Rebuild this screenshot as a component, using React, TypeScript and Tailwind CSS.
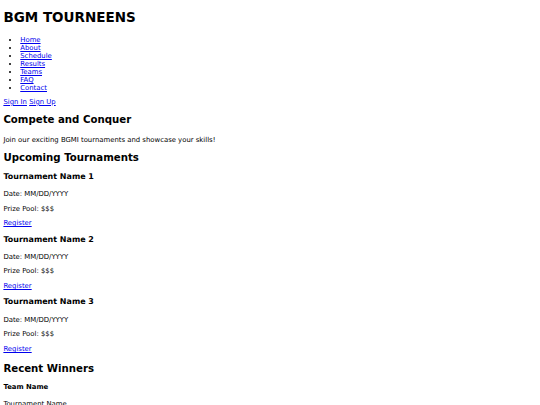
// Plain, unstyled-looking landing page, drawn at 0.421875 of a 1280px layout.

const NAV_LINKS = ["Home", "About", "Schedule", "Results", "Teams", "FAQ", "Contact"];

const TOURNAMENTS = ["Tournament Name 1", "Tournament Name 2", "Tournament Name 3"];

const link = "text-[#0000ee] underline";
const para = "my-[6.75px] leading-[8.016px]";
const h2 = "text-[10.2px] leading-[11.81px] font-bold";
const h3 = "my-[8.25px] text-[7.98px] leading-[8.86px] font-bold";

function TournamentCard({ name }: { name: string }) {
  return (
    <div>
      <h3 className={h3}>{name}</h3>
      <p className={para}>Date: MM/DD/YYYY</p>
      <p className={para}>Prize Pool: $$$</p>
      <a href="#" className={`${link} leading-[8.016px]`}>
        Register
      </a>
    </div>
  );
}

export default function App() {
  return (
    <div className="m-[3.375px] bg-white font-['DejaVu_Sans',sans-serif] text-[6.88px] leading-[8.016px] text-black">
      <header>
        <h1 className="mt-[9.045px] mb-[10.6px] text-[13.5px] leading-[16.03px] font-bold">BGM TOURNEENS</h1>
        <nav>
          <ul className="mt-[6.75px] mb-[6.1px] list-disc pl-[16.875px]">
            {NAV_LINKS.map((item) => (
              <li key={item} className="leading-[8.016px]">
                <a href="#" className={link}>
                  {item}
                </a>
              </li>
            ))}
          </ul>
        </nav>
        <div className="leading-[8.016px]">
          <a href="#" className={link}>
            Sign In
          </a>{" "}
          <a href="#" className={link}>
            Sign Up
          </a>
        </div>
      </header>

      <section>
        <h2 className={`${h2} mt-[8.404px] mb-[9.7px]`}>Compete and Conquer</h2>
        <p className={para}>Join our exciting BGMI tournaments and showcase your skills!</p>
      </section>

      <section>
        <h2 className={`${h2} mt-[8.404px] mb-[8.7px]`}>Upcoming Tournaments</h2>
        {TOURNAMENTS.map((name) => (
          <TournamentCard key={name} name={name} />
        ))}
      </section>

      <section>
        <h2 className={`${h2} mt-[9.4px] mb-[8.404px]`}>Recent Winners</h2>
        <div>
          <h4 className="my-[8.978px] leading-[8.016px] font-bold">Team Name</h4>
          <p className={para}>Tournament Name</p>
          <p className={para}>Prize: $$$</p>
        </div>
      </section>
    </div>
  );
}
